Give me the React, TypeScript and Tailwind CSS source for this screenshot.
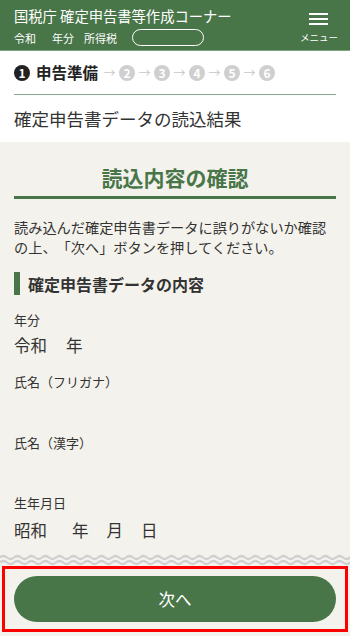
import React from "react";

const font = { fontFamily: '"Noto Sans CJK JP", "Noto Sans", sans-serif' };

function Step({ n, active }: { n: number; active?: boolean }) {
  return (
    <span
      className={`inline-flex h-[16px] w-[16px] items-center justify-center rounded-full text-[12px] font-bold leading-none text-white ${
        active ? "bg-[#222222]" : "bg-[#cfcfcf]"
      }`}
    >
      {n}
    </span>
  );
}

function Arrow() {
  return <span className="mx-[3.5px] text-[12px] leading-none text-[#c8c8c8]">→</span>;
}

function wave(y: number) {
  let d = `M0 ${y}`;
  for (let x = 0; x < 360; x += 14) d += ` Q${x + 3.5} ${y - 3} ${x + 7} ${y} T${x + 14} ${y}`;
  return d;
}

export default function App() {
  return (
    <div
      className="relative h-[636px] w-[350px] overflow-hidden bg-white text-[#333333] [text-spacing-trim:space-all]"
      style={font}
    >
      {/* header */}
      <div className="flex h-[51px] items-start justify-between border-b border-[#7fa37e] bg-[#497649] pl-[14px] pr-[12px] text-white">
        <div className="flex flex-col">
          <div className="mt-[6px] text-[14.3px] leading-[20px]">国税庁 確定申告書等作成コーナー</div>
          <div className="mt-[3px] flex items-center text-[11px] leading-[14px]">
            <span>令和</span>
            <span className="ml-[16px]">年分</span>
            <span className="ml-[10px]">所得税</span>
            <span className="ml-[15px] inline-block h-[17px] w-[72px] rounded-full border border-white"></span>
          </div>
        </div>
        <div className="flex flex-col items-center">
          <div className="mt-[13px] flex w-[19px] flex-col gap-[3px]">
            <span className="h-[2px] w-full bg-white"></span>
            <span className="h-[2px] w-full bg-white"></span>
            <span className="h-[2px] w-full bg-white"></span>
          </div>
          <div className="mt-[6px] text-[9.5px] leading-[12px]">メニュー</div>
        </div>
      </div>

      {/* steps */}
      <div className="px-[14px]">
        <div className="flex h-[44px] items-center border-b border-[#8aa889] pt-[1px]">
          <Step n={1} active />
          <span className="ml-[6px] text-[15.5px] font-bold leading-none text-[#222222]">申告準備</span>
          <span className="ml-[2px]" />
          <Arrow />
          <Step n={2} />
          <Arrow />
          <Step n={3} />
          <Arrow />
          <Step n={4} />
          <Arrow />
          <Step n={5} />
          <Arrow />
          <Step n={6} />
        </div>
        <div className="flex h-[47px] items-center text-[17.5px] leading-none text-[#333333]">確定申告書データの読込結果</div>
      </div>

      {/* body */}
      <div className="bg-[#f3f2ec] px-[14px] pt-[20px]">
        <div className="border-b-[3px] border-[#497649] pb-[4px] text-center text-[21px] font-bold leading-[30px] text-[#497649]">
          読込内容の確認
        </div>
        <p className="mt-[18px] text-[14.2px] leading-[20px] text-[#333333]">
          読み込んだ確定申告書データに誤りがないか確認の上、「次へ」ボタンを押してください。
        </p>
        <div className="mt-[15px] flex h-[23px] items-center border-l-[6px] border-[#497649] pl-[8px] text-[16px] font-bold leading-none text-[#333333]">
          確定申告書データの内容
        </div>

        <div className="mt-[16px] text-[13px] leading-[18px]">年分</div>
        <div className="mt-[5px] text-[16.5px] leading-[22px]">
          令和<span className="ml-[19px]">年</span>
        </div>

        <div className="mt-[17px] text-[13px] leading-[18px]">氏名（フリガナ）</div>
        <div className="h-[43px]" />

        <div className="text-[13px] leading-[18px]">氏名（漢字）</div>
        <div className="h-[42px]" />

        <div className="text-[13px] leading-[18px]">生年月日</div>
        <div className="mt-[7px] text-[16.5px] leading-[22px]">
          昭和<span className="ml-[25px]">年</span>
          <span className="ml-[18px]">月</span>
          <span className="ml-[18px]">日</span>
        </div>
        <div className="h-[12px]" />
      </div>

      {/* wave */}
      <div className="bg-[#f3f2ec]">
        <svg width="350" height="13" viewBox="0 0 350 13" className="block">
          <path d={wave(4.5)} fill="none" stroke="#cfcfcf" strokeWidth="2.2" />
          <path d={wave(9.5)} fill="none" stroke="#cfcfcf" strokeWidth="2.2" />
        </svg>
      </div>

      {/* footer button area */}
      <div className="bg-[#f3f2ec] pb-[10px]">
        <div className="mx-[2px] border-[3px] border-[#ff0000] px-[9px] py-[7px]">
          <div className="flex h-[46px] items-center justify-center rounded-full bg-[#497649] text-[16.5px] text-white">
            次へ
          </div>
        </div>
      </div>
    </div>
  );
}
